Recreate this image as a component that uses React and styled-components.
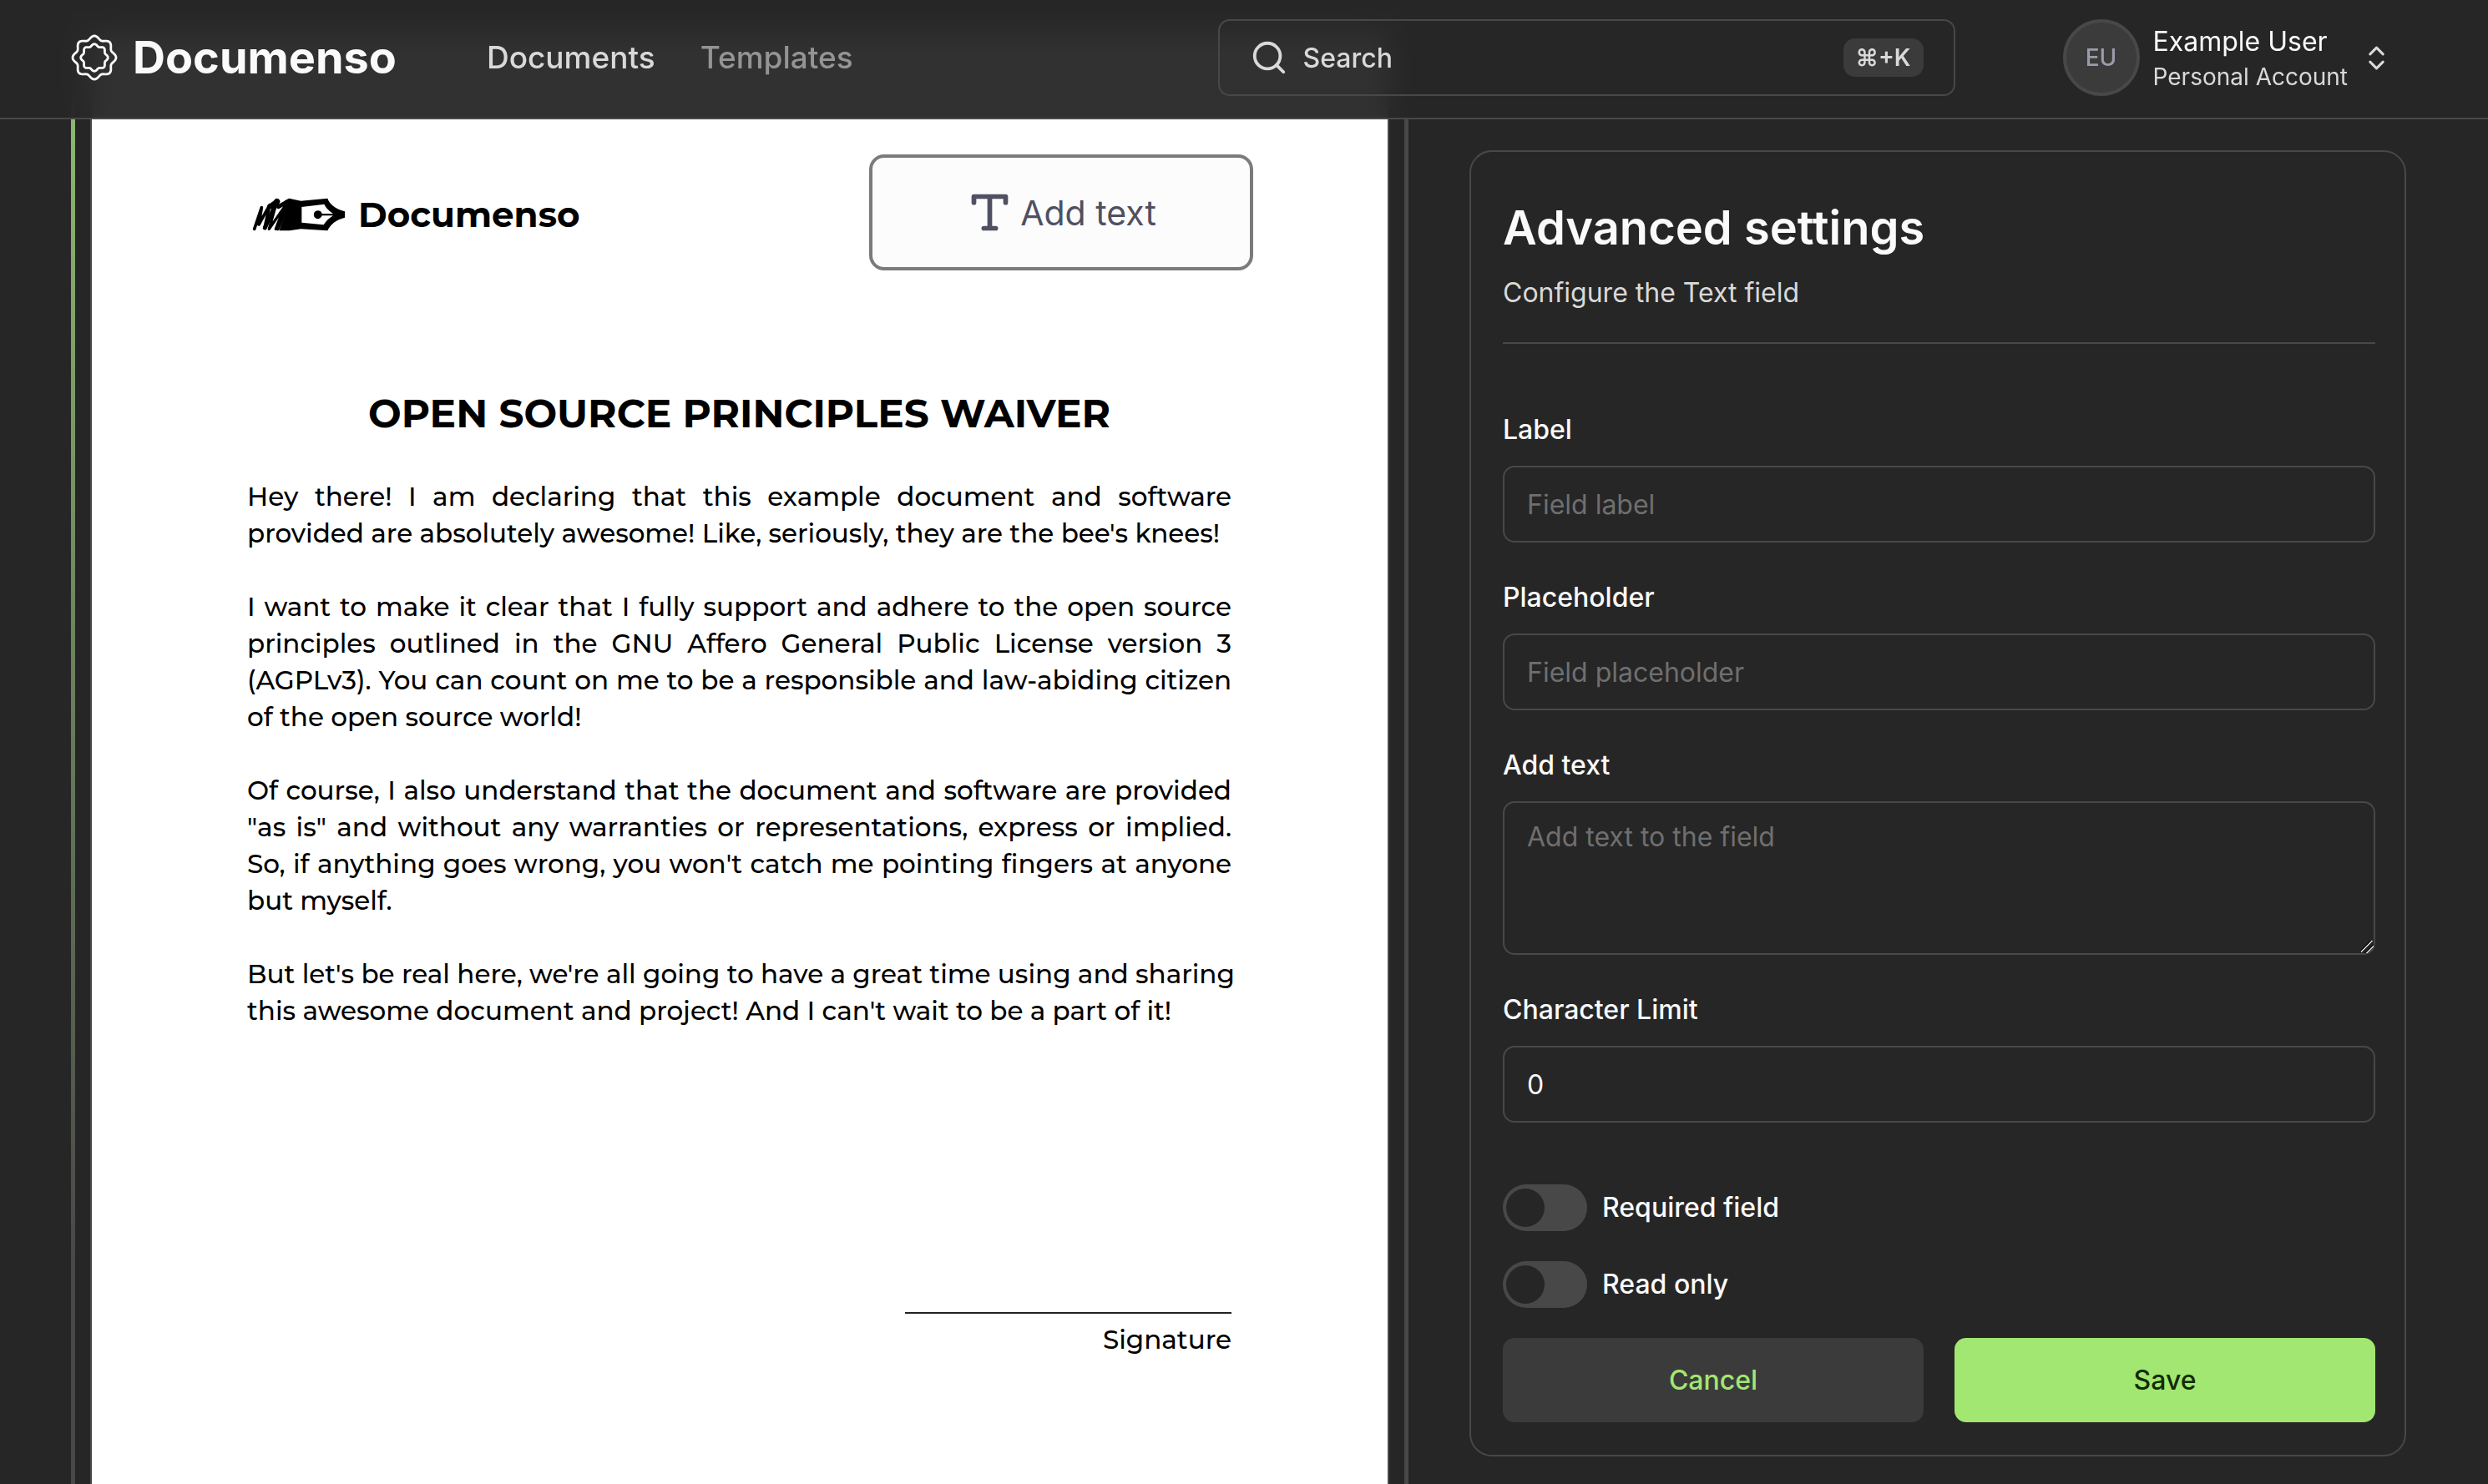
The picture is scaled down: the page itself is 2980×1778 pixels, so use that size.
import React, { useState } from "react";
import styled, { createGlobalStyle, css } from "styled-components";
import { ChevronsUpDown, Search } from "lucide-react";

const color = {
  background: "#262626",
  border: "#484848",
  muted: "#3b3b3b",
  text: "#fafafa",
  soft: "#d9d9d9",
  faint: "#949494",
  placeholder: "#6f6f6f",
  primary: "#a2e771",
  onPrimary: "#122b04",
  ink: "#4f5062",
};

const GlobalStyle = createGlobalStyle`
  *, *::before, *::after { box-sizing: border-box; }
  body {
    margin: 0;
    background: ${color.background};
    color: ${color.text};
    font-family: Inter, "Liberation Sans", sans-serif;
  }
  button, input, textarea { font: inherit; color: inherit; }
`;

const Shell = styled.div`
  display: flex;
  flex-direction: column;
  height: 100vh;
  overflow: hidden;
`;

/* ---------- header ---------- */

const Header = styled.header`
  position: sticky;
  top: 0;
  z-index: 2;
  flex: none;
  display: flex;
  align-items: center;
  padding: 23px 115px 26px 85px;
  border-bottom: 2px solid ${color.border};
  background: rgba(38, 38, 38, 0.95);
  backdrop-filter: blur(18px);
`;

const Brand = styled.a`
  display: flex;
  align-items: center;
  gap: 18px;
  color: ${color.text};
  font-size: 54px;
  line-height: 64px;
  font-weight: 700;
  text-decoration: none;
`;

const Nav = styled.nav`
  display: flex;
  gap: 54px;
  margin-left: 108px;
`;

const NavLink = styled.a`
  color: ${(p) => (p.$active ? color.soft : color.faint)};
  font-size: 37px;
  line-height: 46px;
  font-weight: 500;
  text-decoration: none;
`;

const SearchButton = styled.button`
  display: flex;
  align-items: center;
  gap: 18px;
  width: 883px;
  height: 92px;
  margin-left: auto;
  padding: 0 36px;
  border: 2px solid ${color.border};
  border-radius: 14px;
  background: transparent;
  color: ${color.soft};
  font-size: 32px;
  font-weight: 500;
`;

const Shortcut = styled.kbd`
  margin-left: auto;
  padding: 0 15px;
  border-radius: 14px;
  background: ${color.muted};
  font-family: inherit;
  font-size: 28px;
  line-height: 46px;
  font-weight: 600;
`;

const AccountButton = styled.button`
  display: flex;
  align-items: center;
  gap: 16px;
  margin-left: 129px;
  padding: 0;
  border: 0;
  background: transparent;
  text-align: left;
`;

const Avatar = styled.span`
  display: grid;
  place-items: center;
  width: 92px;
  height: 92px;
  border: 4px solid ${color.border};
  border-radius: 50%;
  background: ${color.muted};
  color: #9b9cab;
  font-size: 28px;
  font-weight: 500;
`;

const AccountText = styled.span`
  display: flex;
  flex-direction: column;
  padding-top: 4px;
  font-size: 32px;
  line-height: 42px;
`;

const AccountKind = styled.span`
  color: ${color.soft};
  font-size: 28px;
`;

/* ---------- page layout ---------- */

const Main = styled.main`
  flex: 1;
  display: grid;
  grid-template-columns: minmax(0, 1602fr) minmax(0, 1122fr);
  gap: 73px;
  margin-top: -143px;
  padding: 13px 98px 0 85px;
`;

const Viewer = styled.section`
  padding: 18px 18px 0;
  border: 5px solid ${color.border};
  border-left-color: transparent;
  border-bottom: 0;
  background: linear-gradient(${color.background}, ${color.background}) padding-box,
    linear-gradient(180deg, #92c273, ${color.border} 1500px) border-box;
`;

const Page = styled.article`
  position: relative;
  height: 100%;
  padding: 197px 187px 0 186px;
  border: 2px solid ${color.border};
  border-bottom: 0;
  background: #fff;
  color: #000;
  font-family: Montserrat, Inter, sans-serif;
  font-size: 31px;
  line-height: 44px;
  font-weight: 500;
`;

const PageLogo = styled.div`
  display: flex;
  align-items: center;
  gap: 15px;
  padding-left: 6px;
  font-size: 42px;
  font-weight: 700;
`;

const PageTitle = styled.h1`
  margin: 189px 0 49px;
  font-size: 47px;
  line-height: 56px;
  font-weight: 700;
  text-align: center;
`;

const Paragraph = styled.p`
  margin: 0 0 44px;
`;

const Line = styled.span`
  display: block;
  white-space: nowrap;
  text-align-last: ${(p) => (p.$last ? "left" : "justify")};
`;

const Signature = styled.div`
  width: 391px;
  margin: 339px 0 0 auto;
  padding-top: 9px;
  border-top: 2px solid #222;
  text-align: right;
`;

const PlacedField = styled.button`
  position: absolute;
  top: 147px;
  right: 161px;
  display: flex;
  align-items: center;
  justify-content: center;
  gap: 8px;
  width: 460px;
  height: 139px;
  border: 4px solid #7b7b7b;
  border-radius: 18px;
  background: #fcfcfc;
  color: ${color.ink};
  font-family: Inter, sans-serif;
  font-size: 41px;
  font-weight: 400;
`;

/* ---------- settings ---------- */

const Settings = styled.form`
  align-self: start;
  margin-top: 167px;
  padding: 59px 35px 39px 38px;
  border: 2px solid ${color.border};
  border-radius: 27px;
`;

const SettingsTitle = styled.h2`
  margin: 0;
  font-size: 56px;
  line-height: 64px;
  font-weight: 600;
`;

const SettingsHint = styled.p`
  margin: 23px 0 0;
  color: ${color.soft};
  font-size: 32px;
  line-height: 46px;
`;

const Divider = styled.hr`
  margin: 36px 0 87px;
  border: 0;
  border-top: 2px solid ${color.border};
`;

const Fields = styled.div`
  display: flex;
  flex-direction: column;
  gap: 50px;
`;

const Field = styled.div`
  display: flex;
  flex-direction: column;
  gap: 27px;
`;

const Label = styled.label`
  font-size: 32px;
  line-height: 32px;
  font-weight: 500;
`;

const control = css`
  width: 100%;
  border: 2px solid ${color.border};
  border-radius: 14px;
  outline: none;
  background: transparent;
  font-size: 32px;
  line-height: 46px;

  &::placeholder {
    color: ${color.placeholder};
  }
`;

const Input = styled.input`
  ${control}
  height: 92px;
  padding: 0 27px;
`;

const Textarea = styled.textarea`
  ${control}
  display: block;
  height: 184px;
  padding: 18px 27px;
  resize: vertical;

  &::-webkit-resizer {
    background: linear-gradient(
      135deg,
      transparent 36%,
      #111 36% 41%,
      #d0d0d0 41% 48%,
      transparent 48% 63%,
      #111 63% 68%,
      #d0d0d0 68% 75%,
      transparent 75%
    );
  }
`;

const Switches = styled.div`
  display: flex;
  flex-direction: column;
  gap: 36px;
  margin: 74px 0 36px;
`;

const SwitchRow = styled.div`
  display: flex;
  align-items: center;
  gap: 18px;
`;

const Switch = styled.input`
  appearance: none;
  display: flex;
  align-items: center;
  width: 101px;
  height: 56px;
  margin: 0;
  padding: 0 4px;
  border-radius: 28px;
  background: ${color.border};

  &::before {
    content: "";
    width: 46px;
    height: 46px;
    border-radius: 50%;
    background: ${color.background};
  }

  &:checked {
    justify-content: flex-end;
    background: ${color.primary};
  }
`;

const Actions = styled.div`
  display: grid;
  grid-template-columns: 1fr 1fr;
  gap: 37px;
`;

const ActionButton = styled.button`
  height: 101px;
  border: 0;
  border-radius: 14px;
  background: ${(p) => (p.$primary ? color.primary : color.muted)};
  color: ${(p) => (p.$primary ? color.onPrimary : color.primary)};
  font-size: 32px;
  font-weight: 500;
`;

/* ---------- drawings ---------- */

const rosette = (radius, wave) => {
  const points = [];
  for (let i = 0; i < 128; i += 1) {
    const a = (i / 128) * Math.PI * 2;
    const r = radius + wave * Math.cos(a * 8);
    points.push(`${(28 + r * Math.sin(a)).toFixed(2)} ${(28 - r * Math.cos(a)).toFixed(2)}`);
  }
  return `M${points.join("L")}Z`;
};

const SealIcon = () => (
  <svg width="56" height="56" viewBox="0 0 56 56" fill="none" stroke="currentColor" strokeWidth="2.8" aria-hidden="true">
    <path d={rosette(23.9, 2.1)} />
    <path d={rosette(15, 1.3)} />
  </svg>
);

const TypeIcon = () => (
  <svg
    width="57"
    height="57"
    viewBox="0 0 24 24"
    fill="none"
    stroke="currentColor"
    strokeWidth="2.4"
    strokeLinecap="round"
    strokeLinejoin="round"
    aria-hidden="true"
  >
    <path d="M4 7V4H20V7M9 20H15M12 4V20" />
  </svg>
);

const PenIcon = () => (
  <svg width="112" height="40" viewBox="65 172 336 120" aria-hidden="true">
    <path d="M198 174L240 183L336 174C343 194 362 211 398 221V243C366 251 346 268 336 290L240 284L200 290H162L174 256L192 210Z" />
    <path d="M243 205L324 195C330 208 341 219 356 229H316A15 15 0 1 0 316 236H356C341 245 330 256 322 269L243 261Z" fill="#fff" />
    <g fill="none" stroke="#000" strokeLinecap="round" strokeLinejoin="round">
      <path strokeWidth="11" d="M73 284L99 207L89 268L128 198L110 280" />
      <path strokeWidth="15" d="M111 280L155 183" />
      <path strokeWidth="10" d="M124 202L155 180L126 284L180 206L150 284" />
      <path strokeWidth="15" d="M160 204L198 182L156 282" />
      <path strokeWidth="22" d="M142 206L154 186M192 190L186 214" />
    </g>
  </svg>
);

const paragraphs = [
  [
    "Hey there! I am declaring that this example document and software",
    "provided are absolutely awesome! Like, seriously, they are the bee's knees!",
  ],
  [
    "I want to make it clear that I fully support and adhere to the open source",
    "principles outlined in the GNU Affero General Public License version 3",
    "(AGPLv3). You can count on me to be a responsible and law-abiding citizen",
    "of the open source world!",
  ],
  [
    "Of course, I also understand that the document and software are provided",
    "\"as is\" and without any warranties or representations, express or implied.",
    "So, if anything goes wrong, you won't catch me pointing fingers at anyone",
    "but myself.",
  ],
  [
    "But let's be real here, we're all going to have a great time using and sharing",
    "this awesome document and project! And I can't wait to be a part of it!",
  ],
];

export default function App() {
  const [limit, setLimit] = useState("0");

  return (
    <>
      <GlobalStyle />
      <Shell>
        <Header>
          <Brand href="#home">
            <SealIcon />
            Documenso
          </Brand>
          <Nav>
            <NavLink href="#documents" $active>Documents</NavLink>
            <NavLink href="#templates">Templates</NavLink>
          </Nav>
          <SearchButton type="button">
            <Search size={46} strokeWidth={2} />
            Search
            <Shortcut>⌘+K</Shortcut>
          </SearchButton>
          <AccountButton type="button">
            <Avatar>EU</Avatar>
            <AccountText>
              Example User
              <AccountKind>Personal Account</AccountKind>
            </AccountText>
            <ChevronsUpDown size={37} color={color.soft} />
          </AccountButton>
        </Header>

        <Main>
          <Viewer>
            <Page>
              <PageLogo>
                <PenIcon />
                Documenso
              </PageLogo>
              <PlacedField type="button">
                <TypeIcon />
                Add text
              </PlacedField>
              <PageTitle>OPEN SOURCE PRINCIPLES WAIVER</PageTitle>
              {paragraphs.map((lines) => (
                <Paragraph key={lines[0]}>
                  {lines.map((line, i) => (
                    <Line key={line} $last={i === lines.length - 1}>{line}</Line>
                  ))}
                </Paragraph>
              ))}
              <Signature>Signature</Signature>
            </Page>
          </Viewer>

          <Settings onSubmit={(e) => e.preventDefault()}>
            <SettingsTitle>Advanced settings</SettingsTitle>
            <SettingsHint>Configure the Text field</SettingsHint>
            <Divider />
            <Fields>
              <Field>
                <Label htmlFor="label">Label</Label>
                <Input id="label" placeholder="Field label" />
              </Field>
              <Field>
                <Label htmlFor="placeholder">Placeholder</Label>
                <Input id="placeholder" placeholder="Field placeholder" />
              </Field>
              <Field>
                <Label htmlFor="text">Add text</Label>
                <Textarea id="text" placeholder="Add text to the field" />
              </Field>
              <Field>
                <Label htmlFor="limit">Character Limit</Label>
                <Input id="limit" inputMode="numeric" value={limit} onChange={(e) => setLimit(e.target.value)} />
              </Field>
            </Fields>
            <Switches>
              <SwitchRow>
                <Switch type="checkbox" role="switch" id="required" />
                <Label htmlFor="required">Required field</Label>
              </SwitchRow>
              <SwitchRow>
                <Switch type="checkbox" role="switch" id="readonly" />
                <Label htmlFor="readonly">Read only</Label>
              </SwitchRow>
            </Switches>
            <Actions>
              <ActionButton type="button">Cancel</ActionButton>
              <ActionButton type="submit" $primary>Save</ActionButton>
            </Actions>
          </Settings>
        </Main>
      </Shell>
    </>
  );
}
